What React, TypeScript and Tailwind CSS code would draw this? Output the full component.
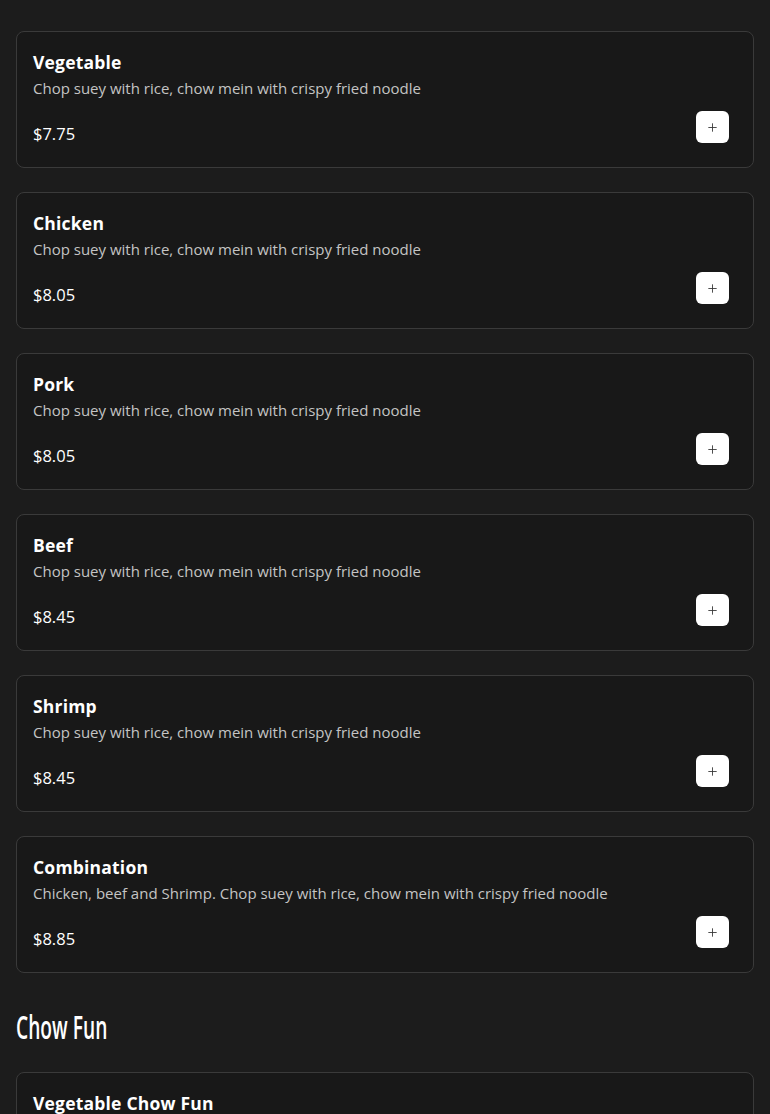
import { Plus } from "lucide-react";

type Item = { name: string; desc: string; price: string };

const items: Item[] = [
  { name: "Vegetable", desc: "Chop suey with rice, chow mein with crispy fried noodle", price: "$7.75" },
  { name: "Chicken", desc: "Chop suey with rice, chow mein with crispy fried noodle", price: "$8.05" },
  { name: "Pork", desc: "Chop suey with rice, chow mein with crispy fried noodle", price: "$8.05" },
  { name: "Beef", desc: "Chop suey with rice, chow mein with crispy fried noodle", price: "$8.45" },
  { name: "Shrimp", desc: "Chop suey with rice, chow mein with crispy fried noodle", price: "$8.45" },
  {
    name: "Combination",
    desc: "Chicken, beef and Shrimp. Chop suey with rice, chow mein with crispy fried noodle",
    price: "$8.85",
  },
];

function MenuCard({ item }: { item: Item }) {
  return (
    <div className="border border-[#3a3a3a] rounded-lg bg-[#181818] pl-4 pr-6 pt-4 pb-[21px]">
      <h3 className="text-[17.5px] leading-7 font-bold text-white tracking-[0.2px]">{item.name}</h3>
      <p className="text-[15px] leading-6 text-[#c4c4c4]">{item.desc}</p>
      <div className="flex items-end justify-between mt-[11px]">
        <span className="text-[16.5px] leading-6 text-white">{item.price}</span>
        <button
          type="button"
          aria-label="add"
          className="w-[33px] h-8 mb-[3px] rounded-md bg-white flex items-center justify-center"
        >
          <Plus size={13} strokeWidth={1.6} color="#333" />
        </button>
      </div>
    </div>
  );
}

export default function App() {
  return (
    <div className="min-h-screen bg-[#1c1c1c] px-4 pt-[31px] font-['Open_Sans',sans-serif]">
      <div className="flex flex-col gap-6">
        {items.map((it) => (
          <MenuCard key={it.name} item={it} />
        ))}
      </div>

      {/* condensed display heading */}
      <h2 className="mt-[36px] mb-[27px] text-[32px] leading-9 text-white font-semibold origin-left scale-x-[0.6]">
        Chow Fun
      </h2>

      <div className="border border-[#3a3a3a] rounded-lg bg-[#181818] pl-4 pr-6 pt-4 pb-6">
        <h3 className="text-[17.5px] leading-7 font-bold text-white tracking-[0.2px]">Vegetable Chow Fun</h3>
        <p className="text-[15px] leading-6 text-[#c4c4c4]">Rice noodle stir fried with vegetables</p>
      </div>
    </div>
  );
}
